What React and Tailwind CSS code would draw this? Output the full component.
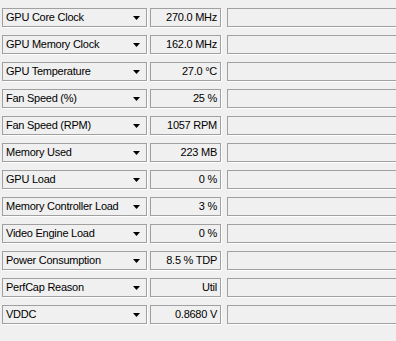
import React from "react";

const rows = [
  ["GPU Core Clock", "270.0 MHz"],
  ["GPU Memory Clock", "162.0 MHz"],
  ["GPU Temperature", "27.0 °C"],
  ["Fan Speed (%)", "25 %"],
  ["Fan Speed (RPM)", "1057 RPM"],
  ["Memory Used", "223 MB"],
  ["GPU Load", "0 %"],
  ["Memory Controller Load", "3 %"],
  ["Video Engine Load", "0 %"],
  ["Power Consumption", "8.5 % TDP"],
  ["PerfCap Reason", "Util"],
  ["VDDC", "0.8680 V"],
];

function Arrow() {
  return (
    <svg width="7" height="4" viewBox="0 0 7 4" className="block shrink-0">
      <path d="M0 0H7L3.5 4Z" fill="#000" />
    </svg>
  );
}

export default function App() {
  return (
    <div
      className="w-[396px] h-[341px] overflow-hidden bg-[#f0f0f0] text-[11px] tracking-[-0.25px] text-black"
      style={{ fontFamily: '"Liberation Sans", Arial, sans-serif' }}
    >
      <div className="flex flex-col gap-[8px] pt-[8px] pl-[2px]">
        {rows.map(([label, value]) => (
          <div key={label} className="flex h-[19px] gap-[3px]">
            <div className="w-[145px] shrink-0 h-[19px] border border-[#a0a0a0] shadow-[1px_1px_0_#ffffff] bg-[#f0f0f0] flex items-center justify-between pl-[3px] pr-[6px] leading-none whitespace-nowrap">
              <span>{label}</span>
              <Arrow />
            </div>
            <div className="w-[71px] shrink-0 h-[19px] border border-[#a0a0a0] shadow-[1px_1px_0_#ffffff] bg-[#f0f0f0] flex items-center justify-end pr-[3px] leading-none whitespace-nowrap">
              {value}
            </div>
            <div className="ml-[3px] w-[200px] shrink-0 h-[19px] border border-[#a0a0a0] shadow-[1px_1px_0_#ffffff] bg-[#f0f0f0]" />
          </div>
        ))}
      </div>
    </div>
  );
}
